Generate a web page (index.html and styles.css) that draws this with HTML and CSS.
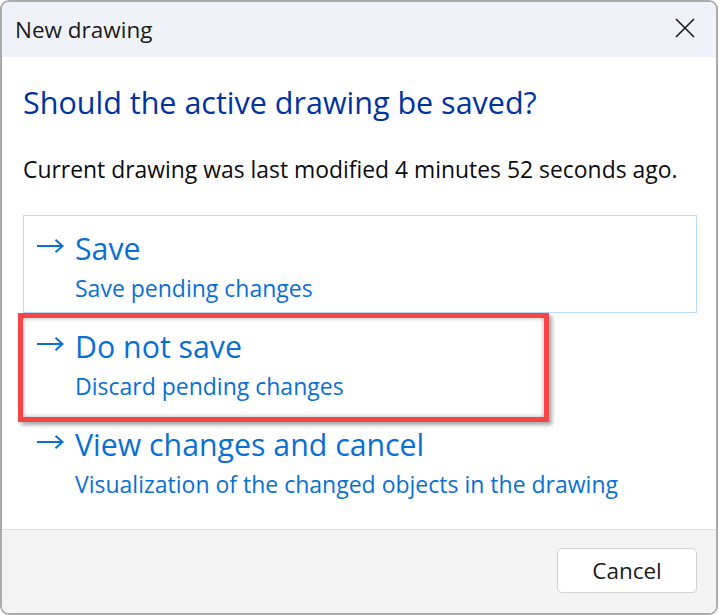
FILE: index.html
```html
<!DOCTYPE html>
<html lang="en">
<head>
<meta charset="utf-8">
<title>New drawing</title>
<link rel="stylesheet" href="styles.css">
</head>
<body>
<div class="window">
  <div class="titlebar">
    <span class="title">New drawing</span>
    <svg class="close" width="20" height="20" viewBox="0 0 20 20" aria-label="Close">
      <path d="M1 1 L19 19 M19 1 L1 19" stroke="#1b1b1b" stroke-width="1.6" fill="none"/>
    </svg>
  </div>
  <div class="content">
    <h1 class="heading">Should the active drawing be saved?</h1>
    <p class="info">Current drawing was last modified 4 minutes 52 seconds ago.</p>
    <div class="options">
      <div class="option option-focused">
        <svg class="arrow" width="28" height="14" viewBox="0 0 28 14"><path d="M1 7 H26.5 M19.5 0.8 L26.5 7 L19.5 13.2" stroke="#0a6fd3" stroke-width="2" fill="none"/></svg>
        <div class="option-text">
          <div class="option-title">Save</div>
          <div class="option-sub">Save pending changes</div>
        </div>
      </div>
      <div class="option">
        <svg class="arrow" width="28" height="14" viewBox="0 0 28 14"><path d="M1 7 H26.5 M19.5 0.8 L26.5 7 L19.5 13.2" stroke="#0a6fd3" stroke-width="2" fill="none"/></svg>
        <div class="option-text">
          <div class="option-title">Do not save</div>
          <div class="option-sub">Discard pending changes</div>
        </div>
        <div class="highlight"></div>
      </div>
      <div class="option">
        <svg class="arrow" width="28" height="14" viewBox="0 0 28 14"><path d="M1 7 H26.5 M19.5 0.8 L26.5 7 L19.5 13.2" stroke="#0a6fd3" stroke-width="2" fill="none"/></svg>
        <div class="option-text">
          <div class="option-title">View changes and cancel</div>
          <div class="option-sub">Visualization of the changed objects in the drawing</div>
        </div>
      </div>
    </div>
  </div>
  <div class="footer">
    <button class="btn">Cancel</button>
  </div>
</div>
</body>
</html>
```
FILE: styles.css
```css
html, body {
  margin: 0;
  padding: 0;
  background: #ffffff;
}
body {
  font-family: "Open Sans", "Noto Sans", sans-serif;
  width: 719px;
  height: 615px;
  overflow: hidden;
}
.window {
  box-sizing: border-box;
  width: 718px;
  height: 615px;
  border: 2px solid #ababab;
  border-radius: 9px;
  overflow: hidden;
  display: flex;
  flex-direction: column;
  background: #ffffff;
}
.titlebar {
  height: 55px;
  flex: none;
  background: #eff3f9;
  display: flex;
  align-items: center;
  justify-content: space-between;
  padding: 0 21px 0 13px;
}
.title {
  font-size: 22.5px;
  line-height: 55px;
  color: #1a1a1a;
}
.close {
  display: block;
  margin-top: -3px;
}
.content {
  flex: 1;
  padding: 25px 19px 0 21px;
}
.heading {
  margin: 0 0 33px;
  font-weight: 400;
  font-size: 30.5px;
  line-height: 40px;
  color: #0033a0;
}
.info {
  margin: 0 0 30px;
  font-size: 22.9px;
  line-height: 30px;
  color: #0c0c0c;
}
.options {
  display: flex;
  flex-direction: column;
}
.option {
  position: relative;
  box-sizing: border-box;
  height: 98px;
  border: 1px solid transparent;
  padding: 13px 12px 5px 12px;
  display: flex;
  align-items: flex-start;
  color: #0a6fd3;
}
.option-focused {
  border-color: #bcdcf5;
}
.arrow {
  display: block;
  flex: none;
  margin-top: 10px;
  margin-right: 11px;
}
.option-title {
  font-size: 30.3px;
  line-height: 40px;
}
.option-sub {
  font-size: 23px;
  line-height: 38px;
}
.highlight {
  position: absolute;
  left: -6px;
  top: -1px;
  width: 531px;
  height: 109px;
  box-sizing: border-box;
  border: 5px solid #f44646;
  box-shadow: 3px 3px 4px rgba(0, 0, 0, 0.35), inset 0 0 4px rgba(0, 0, 0, 0.35);
  pointer-events: none;
}
.footer {
  flex: none;
  height: 84px;
  box-sizing: border-box;
  border-top: 1px solid #dcdcdc;
  background: #f3f3f3;
  display: flex;
  justify-content: flex-end;
  align-items: flex-start;
  padding: 18px 19px 0 0;
}
.btn {
  width: 140px;
  height: 45px;
  border: 1px solid #d2d2d2;
  border-radius: 5px;
  background: #ffffff;
  font-family: "Open Sans", "Noto Sans", sans-serif;
  font-size: 22.5px;
  color: #1a1a1a;
  padding: 0;
}
```
